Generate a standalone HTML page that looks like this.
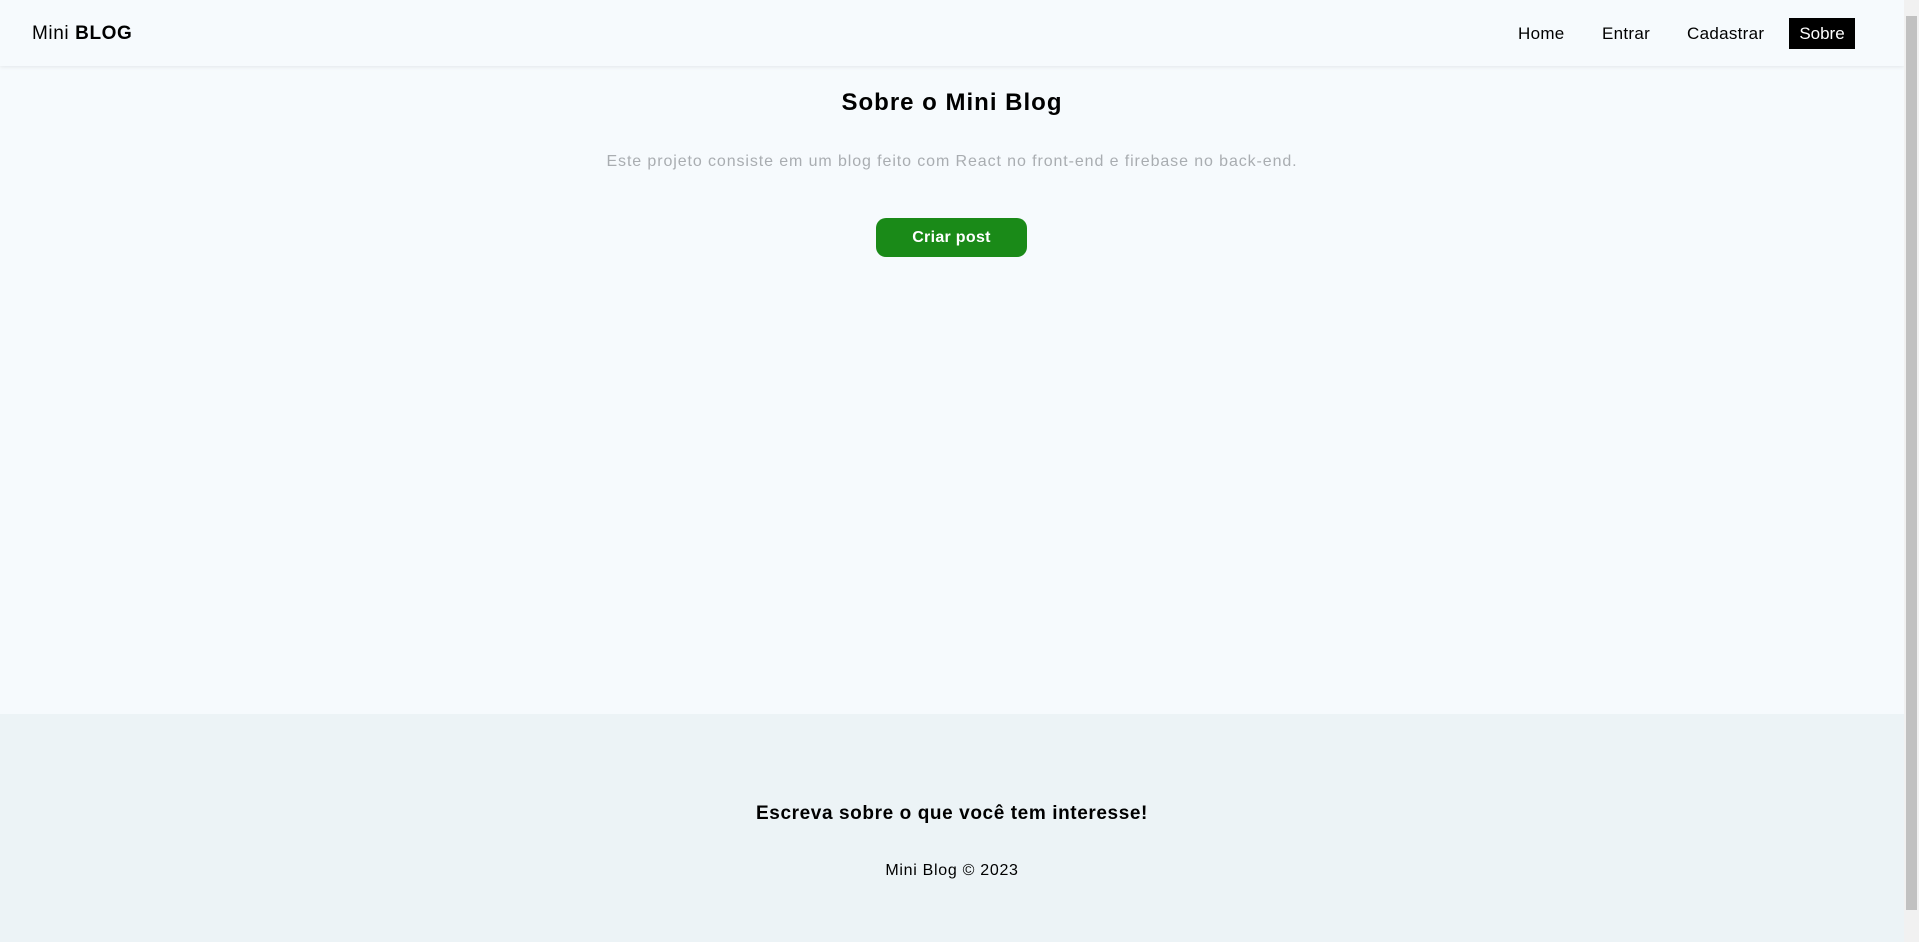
<!DOCTYPE html>
<html><head><meta charset="utf-8"><style>
*{margin:0;padding:0;box-sizing:border-box}
html,body{width:1919px;height:942px;overflow:hidden}
body{font-family:"Liberation Sans",sans-serif;background:#f6fafd;position:relative;color:#000}
.nav{position:absolute;left:0;top:0;width:1904px;height:66px;background:#f6fafd;box-shadow:0 1px 4px rgba(0,0,0,.08)}
.logo{position:absolute;left:32px;top:23px;font-size:19px;letter-spacing:.6px}
.logo b{font-weight:900}
.links a{position:absolute;top:24px;font-size:17px;color:#000;text-decoration:none;letter-spacing:.3px}
.sobre{position:absolute;left:1789px;top:18px;width:66px;height:31px;background:#000;color:#fff;font-size:17px;text-align:center;line-height:31px}
h1{position:absolute;left:0;width:1904px;top:89px;text-align:center;font-size:24px;font-weight:bold;letter-spacing:1px}
p.d{position:absolute;left:0;width:1904px;top:153px;text-align:center;font-size:16px;color:#a9adb1;letter-spacing:.9px}
.btn{position:absolute;left:876px;top:218px;width:151px;height:39px;background:#1a8a18;border-radius:10px;color:#fff;font-weight:bold;font-size:16px;text-align:center;line-height:40px;letter-spacing:.3px}
.foot{position:absolute;left:0;top:714px;width:1904px;height:228px;background:#ecf3f6}
.foot h3{position:absolute;left:0;width:100%;top:89px;text-align:center;font-size:19px;font-weight:bold;letter-spacing:.6px}
.foot p{position:absolute;left:0;width:100%;top:148px;text-align:center;font-size:16px;letter-spacing:.7px}
.sb{position:absolute;left:1904px;top:0;width:15px;height:942px;background:#f1f1f1}
.sb i{position:absolute;left:2px;top:16px;width:11px;height:894px;background:#c1c1c1}
</style></head><body>
<div class="nav">
<div class="logo">Mini <b>BLOG</b></div>
<div class="links">
<a style="left:1518px">Home</a>
<a style="left:1602px">Entrar</a>
<a style="left:1687px">Cadastrar</a>
</div>
<div class="sobre">Sobre</div>
</div>
<h1>Sobre o Mini Blog</h1>
<p class="d">Este projeto consiste em um blog feito com React no front-end e firebase no back-end.</p>
<div class="btn">Criar post</div>
<div class="foot">
<h3>Escreva sobre o que você tem interesse!</h3>
<p>Mini Blog © 2023</p>
</div>
<div class="sb"><i></i></div>
</body></html>
